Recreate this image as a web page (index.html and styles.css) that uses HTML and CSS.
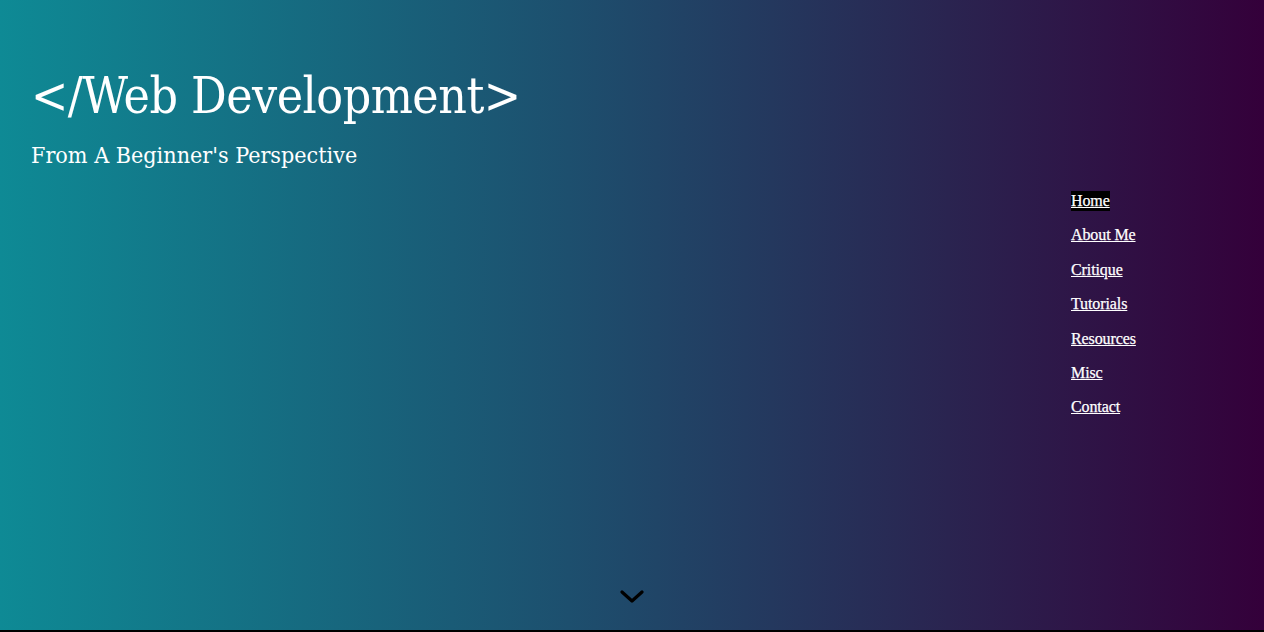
FILE: index.html
```html
<!DOCTYPE html>
<html lang="en">
<head>
<meta charset="utf-8">
<title>Web Development</title>
<link rel="stylesheet" href="styles.css">
</head>
<body>
<header class="hero">
  <div class="brand">
    <h1 class="title">&lt;/Web Development&gt;</h1>
    <p class="subtitle">From A Beginner's Perspective</p>
  </div>
  <nav class="nav">
    <a class="nav-link active" href="#">Home</a>
    <a class="nav-link" href="#">About Me</a>
    <a class="nav-link" href="#">Critique</a>
    <a class="nav-link" href="#">Tutorials</a>
    <a class="nav-link" href="#">Resources</a>
    <a class="nav-link" href="#">Misc</a>
    <a class="nav-link" href="#">Contact</a>
  </nav>
  <div class="down">
    <svg width="24" height="14" viewBox="0 0 24 14"><path d="M2 2 L12 11 L22 2" fill="none" stroke="#000" stroke-width="3.2" stroke-linecap="round" stroke-linejoin="round"/></svg>
  </div>
</header>
</body>
</html>
```
FILE: styles.css
```css
html, body {
  margin: 0;
  padding: 0;
  background: #000;
}
body {
  height: 632px;
  overflow: hidden;
  font-family: "DejaVu Serif", "Liberation Serif", serif;
}
.hero {
  position: relative;
  height: 630px;
  background: linear-gradient(to right, #0e8a95 0%, #1d4f6e 45%, #2a2450 75%, #34003a 100%);
  display: grid;
  grid-template-columns: 1fr 193px;
  grid-template-rows: auto 1fr;
  color: #fff;
}
.brand {
  padding: 67px 0 0 31px;
  grid-column: 1 / 3;
  grid-row: 1;
}
.title {
  margin: 0;
  font-family: "DejaVu Serif Condensed", "DejaVu Serif", serif;
  font-weight: normal;
  font-size: 49.5px;
  line-height: 58px;
  letter-spacing: -0.5px;
  color: #fff;
}
.subtitle {
  margin: 16px 0 0 0;
  font-family: "DejaVu Serif Condensed", "DejaVu Serif", serif;
  font-size: 23.1px;
  line-height: 28px;
  color: #fff;
}
.nav {
  grid-column: 2;
  grid-row: 2;
  display: flex;
  flex-direction: column;
  align-items: flex-start;
  gap: 14.4px;
  padding-top: 22px;
}
.nav-link {
  font-family: "Liberation Serif", serif;
  font-size: 16px;
  line-height: 20px;
  color: #fff;
  text-decoration: underline;
  letter-spacing: -0.1px;
  -webkit-text-stroke: 0.25px #fff;
}
.nav-link.active {
  background: #000;
}
.down {
  position: absolute;
  left: 620px;
  top: 589px;
  width: 24px;
  height: 14px;
}
```
